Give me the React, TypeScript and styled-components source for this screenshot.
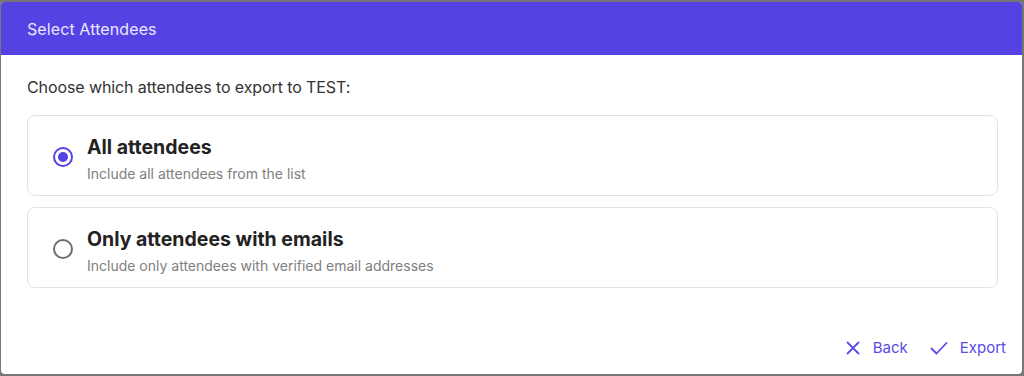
import React, { useState } from "react";
import styled, { createGlobalStyle } from "styled-components";

const GlobalStyle = createGlobalStyle`
  html, body {
    margin: 0;
    padding: 0;
    background: #767676;
  }
  body {
    font-family: Inter, "Noto Sans", sans-serif;
  }
`;

const options = [
  {
    id: "all",
    title: "All attendees",
    subtitle: "Include all attendees from the list",
  },
  {
    id: "emails",
    title: "Only attendees with emails",
    subtitle: "Include only attendees with verified email addresses",
  },
];

const App = () => {
  const [selected, setSelected] = useState("all");

  return (
    <>
      <GlobalStyle />
      <Backdrop>
        <Dialog>
          <Header>Select Attendees</Header>
          <Body>
            <Prompt>Choose which attendees to export to TEST:</Prompt>
            <OptionList>
              {options.map((opt) => (
                <OptionCard key={opt.id} onClick={() => setSelected(opt.id)}>
                  <Radio $checked={selected === opt.id} />
                  <OptionText>
                    <OptionTitle>{opt.title}</OptionTitle>
                    <OptionSub>{opt.subtitle}</OptionSub>
                  </OptionText>
                </OptionCard>
              ))}
            </OptionList>
          </Body>
          <Footer>
            <ActionButton>
              <svg width="16" height="16" viewBox="0 0 16 16" fill="none">
                <path
                  d="M2.5 2.5 L13.5 13.5 M13.5 2.5 L2.5 13.5"
                  stroke="currentColor"
                  strokeWidth="1.8"
                  strokeLinecap="round"
                />
              </svg>
              Back
            </ActionButton>
            <ActionButton>
              <svg width="18" height="16" viewBox="0 0 18 16" fill="none">
                <path
                  d="M1.5 8.5 L6.5 13.5 L16.5 3"
                  stroke="currentColor"
                  strokeWidth="1.8"
                  strokeLinecap="round"
                  strokeLinejoin="round"
                />
              </svg>
              Export
            </ActionButton>
          </Footer>
        </Dialog>
      </Backdrop>
    </>
  );
};

export default App;

const Backdrop = styled.div`
  width: 1024px;
  height: 376px;
  padding: 2px 2px 2px 1px;
  box-sizing: border-box;
  display: flex;
`;

const Dialog = styled.div`
  flex: 1;
  display: flex;
  flex-direction: column;
  background: #ffffff;
  border-radius: 4px;
  overflow: hidden;
`;

const Header = styled.div`
  height: 53px;
  background: #5442e3;
  color: #e9e6ff;
  font-size: 16px;
  display: flex;
  align-items: center;
  padding: 0 26px;
  letter-spacing: 0.1px;
`;

const Body = styled.div`
  padding: 22px 24px 0 26px;
  flex: 1;
`;

const Prompt = styled.div`
  font-size: 16px;
  color: #333333;
  line-height: 20px;
  letter-spacing: -0.1px;
`;

const OptionList = styled.div`
  margin-top: 18px;
  display: flex;
  flex-direction: column;
  gap: 11px;
`;

const OptionCard = styled.div`
  height: 81px;
  box-sizing: border-box;
  border: 1px solid #e2e2e2;
  border-radius: 8px;
  display: flex;
  align-items: center;
  padding: 6px 24px 0 25px;
  gap: 14px;
  cursor: pointer;
`;

const Radio = styled.span<{ $checked: boolean }>`
  width: 20px;
  height: 20px;
  box-sizing: border-box;
  border-radius: 50%;
  border: 2px solid ${(p) => (p.$checked ? "#5442e3" : "#6e6e6e")};
  display: flex;
  align-items: center;
  justify-content: center;
  flex-shrink: 0;
  margin-bottom: 4px;
  &::after {
    content: "";
    width: 10px;
    height: 10px;
    border-radius: 50%;
    background: #5442e3;
    display: ${(p) => (p.$checked ? "block" : "none")};
  }
`;

const OptionText = styled.div`
  display: flex;
  flex-direction: column;
  gap: 6px;
`;

const OptionTitle = styled.div`
  font-size: 19.5px;
  font-weight: 700;
  color: #222222;
  line-height: 24px;
`;

const OptionSub = styled.div`
  font-size: 14px;
  color: #808080;
  line-height: 18px;
`;

const Footer = styled.div`
  display: flex;
  justify-content: flex-end;
  gap: 22px;
  padding: 0 16px 16px 0;
`;

const ActionButton = styled.button`
  background: none;
  border: none;
  padding: 0;
  font-family: inherit;
  font-size: 15px;
  color: #5b4ce6;
  display: flex;
  align-items: center;
  gap: 12px;
  cursor: pointer;
  line-height: 20px;
`;
